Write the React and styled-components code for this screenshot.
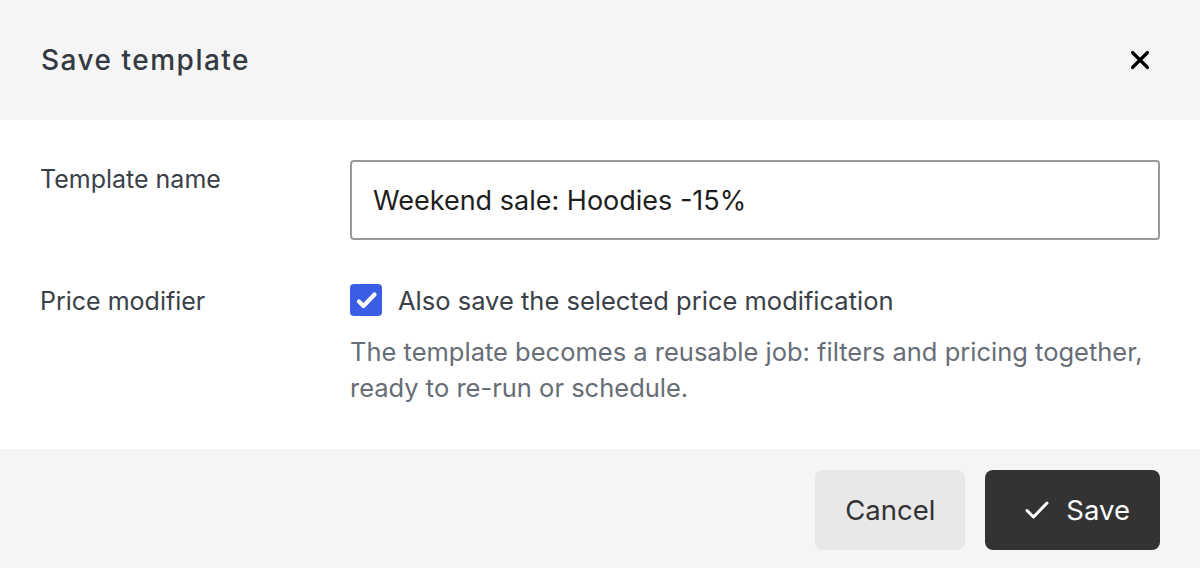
import React, { useState } from "react";
import styled, { createGlobalStyle } from "styled-components";

const GlobalStyle = createGlobalStyle`
  html, body {
    margin: 0;
    padding: 0;
    background: #fff;
  }
  body {
    font-family: Inter, "Noto Sans", "Liberation Sans", sans-serif;
    -webkit-font-smoothing: antialiased;
  }
`;

// modal for saving the current filters as a template
const SaveTemplate = () => {
  const [name, setName] = useState("Weekend sale: Hoodies -15%");
  const [withPrice, setWithPrice] = useState(true);

  return (
    <Dialog>
      <Header>
        <Title>Save template</Title>
        <CloseButton aria-label="Close">
          <svg width="20" height="20" viewBox="0 0 20 20">
            <path
              d="M2.5 2.5 L17.5 17.5 M17.5 2.5 L2.5 17.5"
              stroke="#000"
              strokeWidth="3.2"
              strokeLinecap="round"
            />
          </svg>
        </CloseButton>
      </Header>

      <Body>
        <Row>
          <Label>Template name</Label>
          <Input value={name} onChange={e => setName(e.target.value)} />
        </Row>
        <Row $last>
          <Label>Price modifier</Label>
          <Field>
            <CheckLine>
              <Box
                $checked={withPrice}
                onClick={() => setWithPrice(!withPrice)}
              >
                {withPrice && (
                  <svg width="32" height="32" viewBox="0 0 32 32">
                    <path
                      d="M9 17.5 L13.5 22 L24.5 10.5"
                      fill="none"
                      stroke="#fff"
                      strokeWidth="4.2"
                      strokeLinecap="round"
                      strokeLinejoin="round"
                    />
                  </svg>
                )}
              </Box>
              <CheckText>Also save the selected price modification</CheckText>
            </CheckLine>
            <Help>
              The template becomes a reusable job: filters and pricing together,
              ready to re-run or schedule.
            </Help>
          </Field>
        </Row>
      </Body>

      <Footer>
        <Button>Cancel</Button>
        <Button $primary>
          <svg width="24" height="20" viewBox="0 0 24 20">
            <path
              d="M2 10.5 L8.5 17 L22 3"
              fill="none"
              stroke="#fff"
              strokeWidth="3"
              strokeLinecap="round"
              strokeLinejoin="round"
            />
          </svg>
          Save
        </Button>
      </Footer>
    </Dialog>
  );
};

export default function App() {
  return (
    <>
      <GlobalStyle />
      <SaveTemplate />
    </>
  );
}

const Dialog = styled.div`
  width: 1200px;
  height: 568px;
  display: flex;
  flex-direction: column;
  background: #fff;
  overflow: hidden;
`;
const Header = styled.div`
  height: 120px;
  flex-shrink: 0;
  display: flex;
  align-items: center;
  justify-content: space-between;
  padding: 0 40px 0 41px;
  box-sizing: border-box;
  background: #f5f5f5;
`;
const Title = styled.h2`
  margin: 0;
  font-size: 28px;
  font-weight: 550;
  color: #333a42;
  letter-spacing: 1.5px;
`;
const CloseButton = styled.button`
  width: 40px;
  height: 40px;
  display: flex;
  align-items: center;
  justify-content: center;
  border: 0;
  padding: 0;
  background: none;
  cursor: pointer;
`;
const Body = styled.div`
  flex: 1;
  padding: 40px 40px 0 40px;
  box-sizing: border-box;
`;
const Row = styled.div`
  display: grid;
  grid-template-columns: 310px 1fr;
  align-items: start;
  margin-bottom: ${p => (p.$last ? 0 : "42px")};
`;
const Label = styled.div`
  font-size: 25px;
  line-height: 38px;
  color: #3a4048;
`;
const Input = styled.input`
  height: 80px;
  box-sizing: border-box;
  border: 2px solid #999;
  border-radius: 4px;
  padding: 0 21px;
  font-family: inherit;
  font-size: 27px;
  color: #1e1e1e;
  outline: none;
  width: 100%;
`;
const Field = styled.div`
  display: flex;
  flex-direction: column;
`;
const CheckLine = styled.label`
  display: flex;
  align-items: center;
  gap: 16px;
  height: 36px;
`;
const Box = styled.span`
  width: 32px;
  height: 32px;
  border-radius: 4px;
  box-sizing: border-box;
  display: flex;
  align-items: center;
  justify-content: center;
  background: ${p => (p.$checked ? "#3b5ce4" : "#fff")};
  border: ${p => (p.$checked ? "none" : "2px solid #999")};
  cursor: pointer;
`;
const CheckText = styled.span`
  font-size: 25.5px;
  color: #3a4048;
`;
const Help = styled.p`
  margin: 16px 0 0;
  font-size: 25.5px;
  line-height: 36px;
  color: #666d76;
`;
const Footer = styled.div`
  height: 119px;
  flex-shrink: 0;
  display: flex;
  align-items: flex-start;
  justify-content: flex-end;
  gap: 20px;
  padding: 21px 40px 0;
  box-sizing: border-box;
  background: #f5f5f5;
`;
const Button = styled.button`
  height: 80px;
  display: flex;
  align-items: center;
  gap: 17px;
  padding: ${p => (p.$primary ? "0 30px 0 40px" : "0 30px")};
  border: 0;
  border-radius: 8px;
  font-family: inherit;
  font-size: 27.5px;
  background: ${p => (p.$primary ? "#333" : "#e8e8e8")};
  color: ${p => (p.$primary ? "#fff" : "#333")};
  cursor: pointer;
`;
